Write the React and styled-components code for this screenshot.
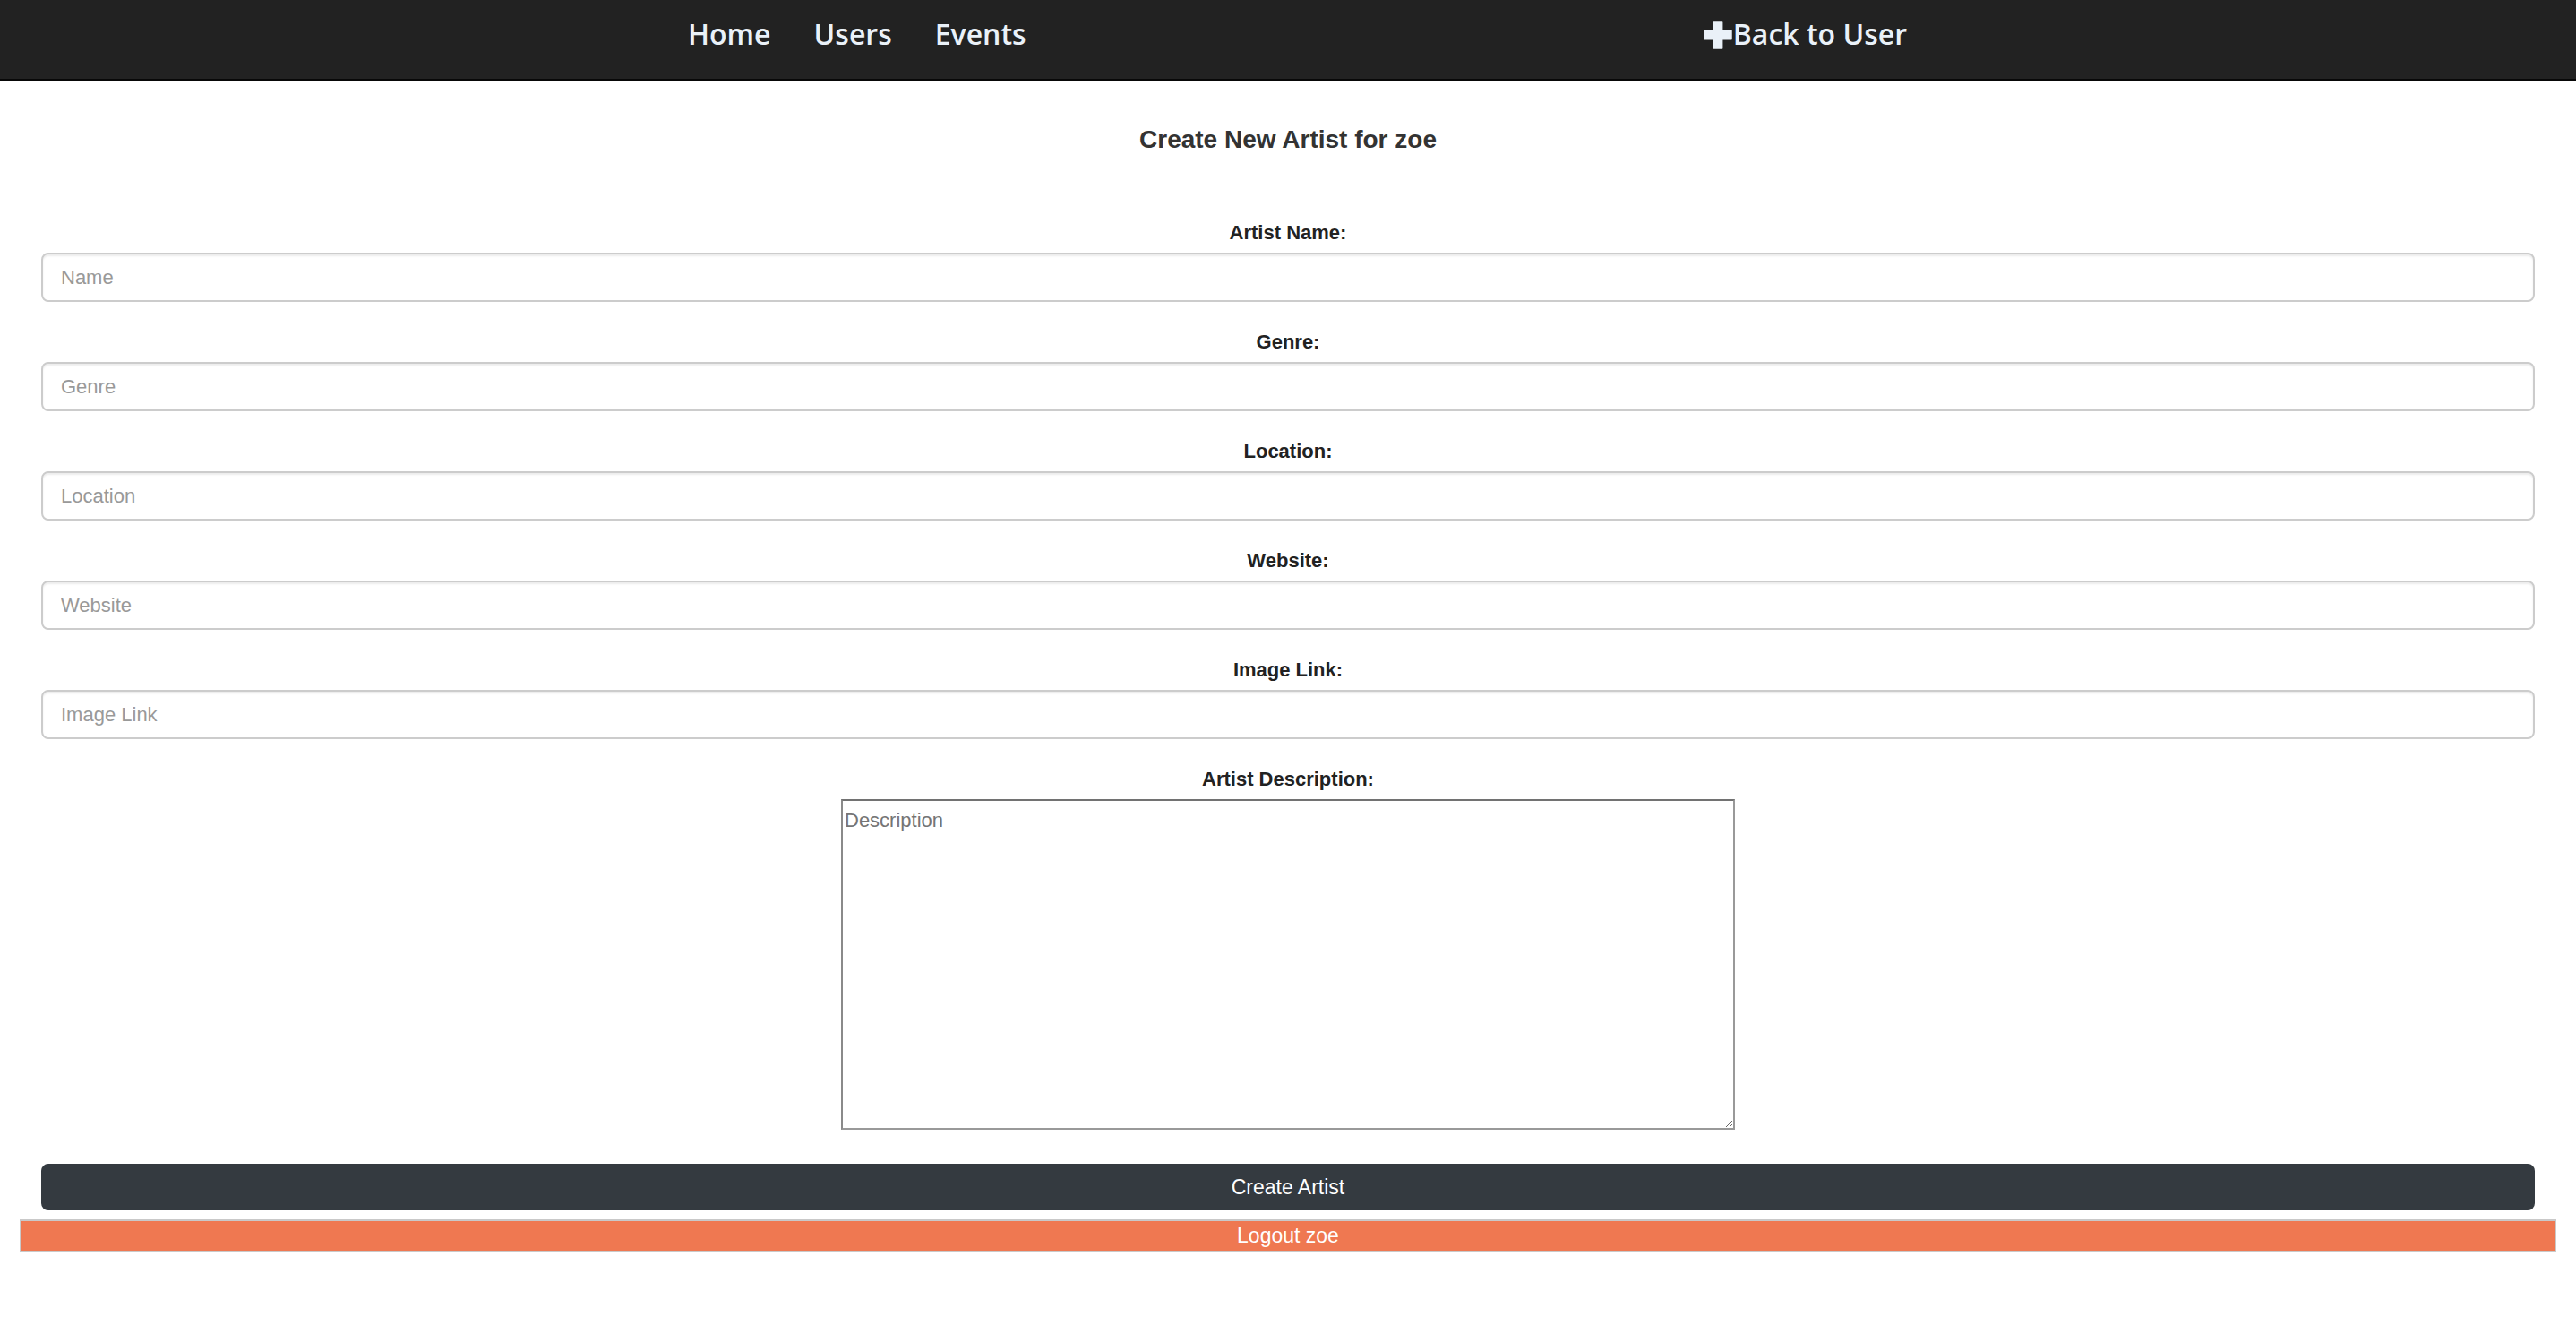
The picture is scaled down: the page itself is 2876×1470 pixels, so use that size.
import React from 'react';
import styled, { createGlobalStyle } from 'styled-components';

const GlobalStyle = createGlobalStyle`
    body {
        margin: 0;
        background: #fff;
        font-family: "Liberation Sans", Arial, sans-serif;
        color: #222;
    }
`;

const Navbar = styled.nav`
    height: 88px;
    background-color: #222;
    border-bottom: 2px solid #080808;
`;

const NavInner = styled.div`
    width: 1382px;
    margin: 0 auto;
    padding: 16px 0 0 21px;
    display: flex;
    justify-content: space-between;
    box-sizing: border-box;
`;

const NavGroup = styled.div`
    display: flex;
    gap: 48px;
`;

const NavLink = styled.a`
    display: flex;
    align-items: center;
    font-family: "Open Sans", sans-serif;
    font-size: 32px;
    line-height: 44px;
    font-weight: 600;
    color: #eaf1f8;
    text-decoration: none;
    cursor: pointer;
`;

const PlusIcon = styled.svg`
    width: 32px;
    height: 32px;
    margin: 2px 1px 0 -4px;
`;

const Page = styled.main`
    padding: 0 22px;
`;

const Title = styled.h5`
    margin: 49px 0 72px;
    text-align: center;
    font-size: 28px;
    line-height: 34px;
    font-weight: 600;
    color: #333;
`;

const Form = styled.form`
    padding: 0 24px;
    display: flex;
    flex-direction: column;
`;

const Group = styled.div`
    display: flex;
    flex-direction: column;
    align-items: center;
    margin-bottom: ${(p) => p.$gap || 30}px;
`;

const Label = styled.label`
    font-size: 22px;
    line-height: 30px;
    font-weight: 700;
    color: #222;
    margin-bottom: 7px;
`;

const Input = styled.input`
    width: 100%;
    height: 55px;
    box-sizing: border-box;
    padding: 0 20px;
    border: 2px solid #ccc;
    border-radius: 8px;
    box-shadow: inset 0 2px 2px rgba(0, 0, 0, 0.075);
    font-family: "Liberation Sans", Arial, sans-serif;
    font-size: 22px;
    color: #555;
    outline: none;

    &::placeholder {
        color: #999;
    }
`;

const TextArea = styled.textarea`
    width: 998px;
    height: 369px;
    box-sizing: border-box;
    padding: 9px 2px;
    border: 2px solid;
    border-color: #727272 #999 #999 #8a8a8a;
    font-family: "Liberation Sans", Arial, sans-serif;
    font-size: 22px;
    color: #333;
    outline: none;

    &::placeholder {
        color: #757575;
    }
`;

const SubmitButton = styled.button`
    width: 100%;
    height: 52px;
    border: none;
    border-radius: 8px;
    background-color: #343a40;
    color: #fff;
    font-family: "Liberation Sans", Arial, sans-serif;
    font-size: 23px;
    cursor: pointer;
`;

const LogoutButton = styled.button`
    display: block;
    width: 100%;
    height: 37px;
    margin-top: 10px;
    padding: 0;
    border: 2px solid #c9c9c9;
    background-color: #ef7851;
    color: #fff;
    font-family: "Liberation Sans", Arial, sans-serif;
    font-size: 23px;
    cursor: pointer;
`;

const fields = [
    { label: 'Artist Name:', placeholder: 'Name' },
    { label: 'Genre:', placeholder: 'Genre' },
    { label: 'Location:', placeholder: 'Location' },
    { label: 'Website:', placeholder: 'Website' },
    { label: 'Image Link:', placeholder: 'Image Link' },
];

const App = () => {
    return (
        <>
            <GlobalStyle />
            <Navbar>
                <NavInner>
                    <NavGroup>
                        <NavLink>Home</NavLink>
                        <NavLink>Users</NavLink>
                        <NavLink>Events</NavLink>
                    </NavGroup>
                    <NavLink>
                        <PlusIcon viewBox="0 0 31 31">
                            <path
                                d="M11 1h9v10h10v9H20v10h-9V20H1v-9h10z"
                                fill="#eaf1f8"
                                stroke="#eaf1f8"
                                strokeWidth="1.5"
                                strokeLinejoin="round"
                            />
                        </PlusIcon>
                        Back to User
                    </NavLink>
                </NavInner>
            </Navbar>
            <Page>
                <Title>Create New Artist for zoe</Title>
                <Form onSubmit={(e) => e.preventDefault()}>
                    {fields.map((f) => (
                        <Group key={f.label}>
                            <Label>{f.label}</Label>
                            <Input placeholder={f.placeholder} />
                        </Group>
                    ))}
                    <Group $gap={38}>
                        <Label>Artist Description:</Label>
                        <TextArea placeholder="Description" />
                    </Group>
                    <SubmitButton>Create Artist</SubmitButton>
                </Form>
                <LogoutButton>Logout zoe</LogoutButton>
            </Page>
        </>
    );
};

export default App;
